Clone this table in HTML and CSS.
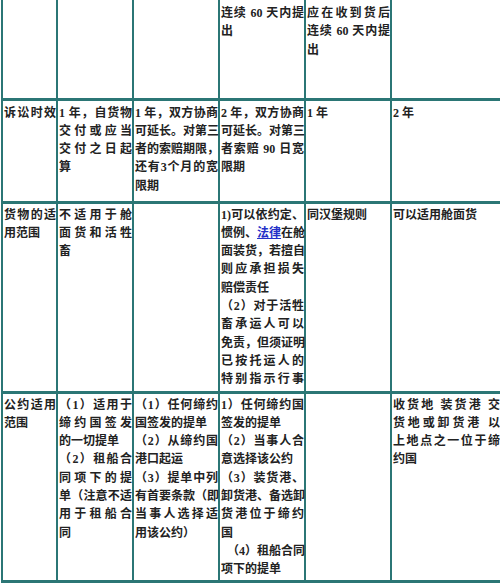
FILE: index.html
```html
<!DOCTYPE html>
<html lang="zh-CN">
<head>
<meta charset="utf-8">
<title>运输公约比较</title>
<link rel="stylesheet" href="styles.css">
</head>
<body>
<table class="sheet">
  <colgroup>
    <col class="c1"><col class="c2"><col class="c3"><col class="c4"><col class="c5"><col class="c6">
  </colgroup>
  <tr class="r1">
    <td></td>
    <td></td>
    <td></td>
    <td><span class="l j">连续 60 天内提</span><span class="l">出</span></td>
    <td><span class="l j">应在收到货后</span><span class="l j">连续 60 天内提</span><span class="l">出</span></td>
    <td></td>
  </tr>
  <tr class="r2">
    <td><span class="l j">诉讼时效</span></td>
    <td><span class="l j">1 年，自货物</span><span class="l j">交付或应当</span><span class="l j">交付之日起</span><span class="l">算</span></td>
    <td><span class="l j">1 年，双方协商</span><span class="l j">可延长。对第三</span><span class="l j">者的索赔期限，</span><span class="l j">还有3个月的宽</span><span class="l">限期</span></td>
    <td><span class="l j">2 年，双方协商</span><span class="l j">可延长。对第三</span><span class="l j">者索赔 90 日宽</span><span class="l">限期</span></td>
    <td><span class="l">1 年</span></td>
    <td><span class="l">2 年</span></td>
  </tr>
  <tr class="r3">
    <td><span class="l j">货物的适</span><span class="l">用范围</span></td>
    <td><span class="l j">不适用于舱</span><span class="l j">面货和活牲</span><span class="l">畜</span></td>
    <td></td>
    <td><span class="l j">1)可以依约定、</span><span class="l j">惯例、<a class="lnk" href="#">法律</a>在舱</span><span class="l j">面装货，若擅自</span><span class="l j">则应承担损失</span><span class="l">赔偿责任</span><span class="l j">（2）对于活牲</span><span class="l j">畜承运人可以</span><span class="l j">免责，但须证明</span><span class="l j">已按托运人的</span><span class="l j">特别指示行事</span></td>
    <td><span class="l">同汉堡规则</span></td>
    <td><span class="l">可以适用舱面货</span></td>
  </tr>
  <tr class="r4">
    <td><span class="l j">公约适用</span><span class="l">范围</span></td>
    <td><span class="l j">（1）适用于</span><span class="l j">缔约国签发</span><span class="l">的一切提单</span><span class="l j">（2）租船合</span><span class="l j">同项下的提</span><span class="l j">单（注意不适</span><span class="l j">用于租船合</span><span class="l">同</span></td>
    <td><span class="l j">（1）任何缔约</span><span class="l">国签发的提单</span><span class="l j">（2）从缔约国</span><span class="l">港口起运</span><span class="l j">（3）提单中列</span><span class="l j">有首要条款（即</span><span class="l j">当事人选择适</span><span class="l">用该公约）</span></td>
    <td><span class="l j">1）任何缔约国</span><span class="l">签发的提单</span><span class="l j">（2）当事人合</span><span class="l">意选择该公约</span><span class="l j">（3）装货港、</span><span class="l j">卸货港、备选卸</span><span class="l j">货港位于缔约</span><span class="l">国</span><span class="l j ind">（4）租船合同</span><span class="l">项下的提单</span></td>
    <td></td>
    <td><span class="l j">收货地 装货港 交</span><span class="l j">货地或卸货港 以</span><span class="l j">上地点之一位于缔</span><span class="l">约国</span></td>
  </tr>
</table>
</body>
</html>
```

FILE: styles.css
```css
html, body {
  margin: 0;
  padding: 0;
  background: #ffffff;
  overflow: hidden;
}

.sheet {
  border-collapse: collapse;
  table-layout: fixed;
  width: 499px;
  margin-left: 1px;
  font-family: "Liberation Serif", "Noto Sans CJK SC", serif;
  font-size: 12px;
  font-weight: 600;
  line-height: 18.3px;
  color: #222222;
}

.c1 { width: 55px; }
.c2 { width: 76px; }
.c3 { width: 86px; }
.c4 { width: 86px; }
.c5 { width: 86px; }
.c6 { width: 110px; }

.sheet td {
  border: 2px solid #2b7675;
  border-top-width: 3px;
  border-bottom-width: 3px;
  padding: 2px 0 0 1px;
  vertical-align: top;
}

.r1 td {
  border-top: none;
  padding-top: 4px;
}

.r1 { height: 99px; }
.r2 { height: 103px; }
.r3 { height: 190px; }
.r4 { height: 189px; }

.r2 td { padding-top: 3px; }

.l {
  display: block;
  white-space: nowrap;
}

.j {
  text-align: justify;
  text-align-last: justify;
}

.ind {
  padding-left: 6px;
}

.lnk {
  color: #2430c8;
  text-decoration: underline;
}
```
